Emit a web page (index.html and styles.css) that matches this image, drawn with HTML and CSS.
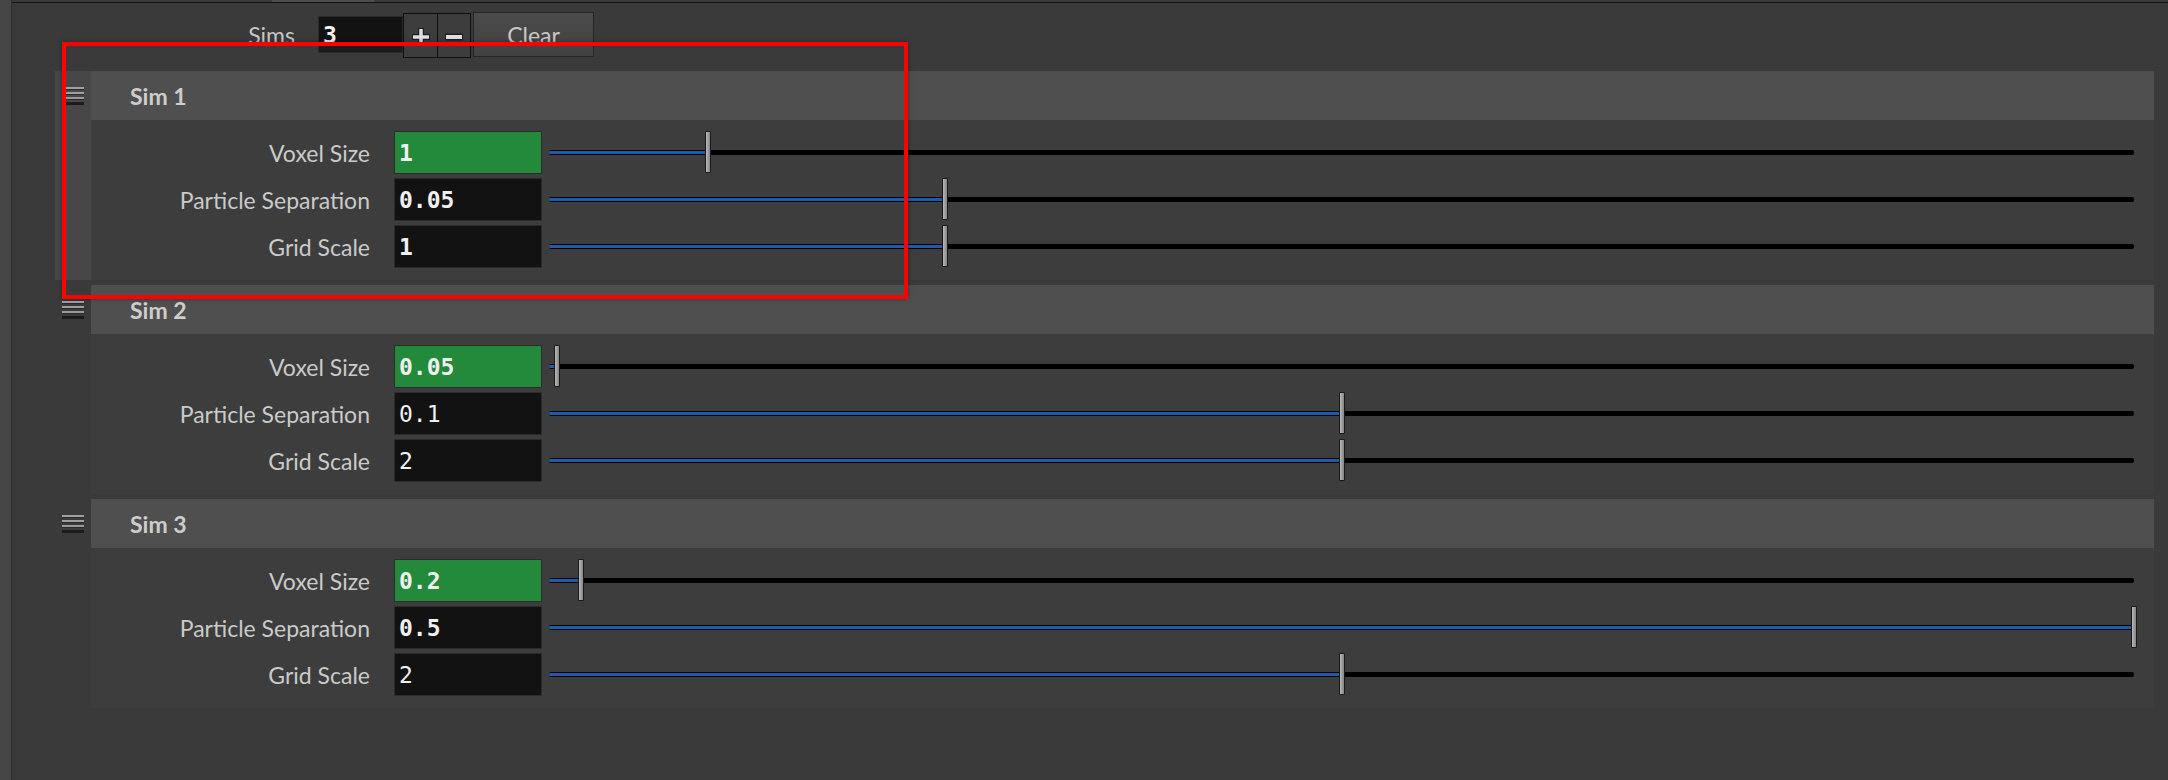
FILE: index.html
```html
<!DOCTYPE html>
<html>
<head>
<meta charset="utf-8">
<link rel="stylesheet" href="styles.css">
</head>
<body>
<div class="app">
  <div class="side"></div>
  <div class="main">
    <div class="topedge"><div class="tab"></div></div>
    <div class="toprow">
      <span class="toplabel">Sims</span>
      <div class="count">3</div>
      <div class="pm">
        <div class="pmb"><svg width="20" height="20" viewBox="0 0 20 20"><path d="M10 1V19M1 10H19" stroke="#1c1e26" stroke-width="6"/><path d="M10 2V18M2 10H18" stroke="#dedede" stroke-width="3.5"/></svg></div>
        <div class="pmb"><svg width="20" height="8" viewBox="0 0 20 8"><path d="M1 4H19" stroke="#1c1e26" stroke-width="7"/><path d="M2 4H18" stroke="#dedede" stroke-width="4"/></svg></div>
      </div>
      <div class="clear">Clear</div>
    </div>

    <div class="list">
      <div class="sim selected">
        <div class="grip"><svg width="22" height="19" viewBox="0 0 22 19"><rect y="0" width="22" height="2" fill="#a0a0a0"/><rect y="2" width="22" height="1" fill="#2a2a2a"/><rect y="5" width="22" height="2" fill="#a0a0a0"/><rect y="7" width="22" height="1" fill="#2a2a2a"/><rect y="10" width="22" height="2" fill="#9a9a9a"/><rect y="12" width="22" height="1" fill="#2a2a2a"/><rect y="15" width="22" height="3" fill="#1c1c1c"/></svg></div>
        <div class="simhead">Sim 1</div>
        <div class="simbody">
          <div class="row"><span class="lbl">Voxel Size</span><div class="val g b">1</div><div class="slider"><div class="track"><div class="fill" style="width:10%"></div></div><div class="thumb" style="left:10%"></div></div></div>
          <div class="row"><span class="lbl">Particle Separation</span><div class="val b">0.05</div><div class="slider"><div class="track"><div class="fill" style="width:25%"></div></div><div class="thumb" style="left:25%"></div></div></div>
          <div class="row"><span class="lbl">Grid Scale</span><div class="val b">1</div><div class="slider"><div class="track"><div class="fill" style="width:25%"></div></div><div class="thumb" style="left:25%"></div></div></div>
        </div>
      </div>

      <div class="sim">
        <div class="grip"><svg width="22" height="19" viewBox="0 0 22 19"><rect y="0" width="22" height="2" fill="#a0a0a0"/><rect y="2" width="22" height="1" fill="#2a2a2a"/><rect y="5" width="22" height="2" fill="#a0a0a0"/><rect y="7" width="22" height="1" fill="#2a2a2a"/><rect y="10" width="22" height="2" fill="#9a9a9a"/><rect y="12" width="22" height="1" fill="#2a2a2a"/><rect y="15" width="22" height="3" fill="#1c1c1c"/></svg></div>
        <div class="simhead">Sim 2</div>
        <div class="simbody">
          <div class="row"><span class="lbl">Voxel Size</span><div class="val g b">0.05</div><div class="slider"><div class="track"><div class="fill" style="width:0.5%"></div></div><div class="thumb" style="left:0.5%"></div></div></div>
          <div class="row"><span class="lbl">Particle Separation</span><div class="val">0.1</div><div class="slider"><div class="track"><div class="fill" style="width:50%"></div></div><div class="thumb" style="left:50%"></div></div></div>
          <div class="row"><span class="lbl">Grid Scale</span><div class="val">2</div><div class="slider"><div class="track"><div class="fill" style="width:50%"></div></div><div class="thumb" style="left:50%"></div></div></div>
        </div>
      </div>

      <div class="sim">
        <div class="grip"><svg width="22" height="19" viewBox="0 0 22 19"><rect y="0" width="22" height="2" fill="#a0a0a0"/><rect y="2" width="22" height="1" fill="#2a2a2a"/><rect y="5" width="22" height="2" fill="#a0a0a0"/><rect y="7" width="22" height="1" fill="#2a2a2a"/><rect y="10" width="22" height="2" fill="#9a9a9a"/><rect y="12" width="22" height="1" fill="#2a2a2a"/><rect y="15" width="22" height="3" fill="#1c1c1c"/></svg></div>
        <div class="simhead">Sim 3</div>
        <div class="simbody">
          <div class="row"><span class="lbl">Voxel Size</span><div class="val g b">0.2</div><div class="slider"><div class="track"><div class="fill" style="width:2%"></div></div><div class="thumb" style="left:2%"></div></div></div>
          <div class="row"><span class="lbl">Particle Separation</span><div class="val b">0.5</div><div class="slider"><div class="track"><div class="fill" style="width:100%"></div></div><div class="thumb" style="left:100%"></div></div></div>
          <div class="row"><span class="lbl">Grid Scale</span><div class="val">2</div><div class="slider"><div class="track"><div class="fill" style="width:50%"></div></div><div class="thumb" style="left:50%"></div></div></div>
        </div>
      </div>
    </div>
  </div>
  <div class="mark"></div>
</div>
</body>
</html>
```
FILE: styles.css
```css
* { box-sizing: border-box; }
html, body { margin: 0; padding: 0; }
body {
  background: #3a3a3a;
  font-family: Lato, "Liberation Sans", sans-serif;
  color: #c8c8c8;
  overflow: hidden;
}
.app {
  position: relative;
  display: flex;
  height: 780px;
}
.side {
  flex: none;
  width: 12px;
  background: #464646;
  border-right: 1px solid #303030;
}
.main {
  flex: 1;
  display: flex;
  flex-direction: column;
}
.topedge {
  height: 3px;
  border-bottom: 1px solid #111;
  display: flex;
}
.tab {
  margin-left: 260px;
  width: 102px;
  background: #4e4e4e;
}
.toprow {
  display: flex;
  align-items: center;
  height: 45px;
  margin-top: 9px;
}
.toplabel {
  width: 283px;
  text-align: right;
  font-size: 23px;
  color: #c6c6c6;
}
.count {
  margin-left: 23px;
  width: 85px;
  height: 37px;
  background: #121212;
  border: 1px solid #2b2b2b;
  box-shadow: inset 0 -6px 0 #1b1b1b;
  font-family: "DejaVu Sans Mono", monospace;
  font-weight: bold;
  font-size: 23px;
  color: #f2f2f2;
  padding-left: 4px;
  display: flex;
  align-items: center;
}
.pm {
  display: flex;
  height: 45px;
  margin-top: 2px;
  border: 1px solid #0e0e0e;
  background: #3d3d3d;
}
.pmb {
  width: 33px;
  display: flex;
  align-items: center;
  justify-content: center;
  padding-top: 3px;
}
.pmb + .pmb { border-left: 1px solid #0e0e0e; }
.clear {
  margin-left: 2px;
  width: 121px;
  height: 45px;
  background: linear-gradient(#4b4b4b, #414141);
  border: 1px solid #262626;
  color: #c8c8c8;
  font-size: 23px;
  display: flex;
  align-items: center;
  justify-content: center;
}
.list {
  margin: 14px 14px 0 43px;
  display: flex;
  flex-direction: column;
  gap: 5px;
}
.sim {
  display: grid;
  grid-template-columns: 36px 1fr;
  grid-template-rows: 49px 160px;
}
.sim.selected { background: #474747; }
.grip {
  display: flex;
  align-items: center;
  padding-left: 7px;
  padding-top: 2px;
}
.simhead {
  background: #4f4f4f;
  font-weight: 700;
  font-size: 23px;
  color: #cdcdcd;
  padding-left: 39px;
  display: flex;
  align-items: center;
}
.simbody {
  grid-column: 2;
  background: #3d3d3d;
  padding: 11px 20px 0 0;
  display: flex;
  flex-direction: column;
  gap: 4px;
}
.row {
  display: flex;
  align-items: center;
  height: 43px;
}
.lbl {
  width: 279px;
  flex: none;
  text-align: right;
  font-size: 23px;
  color: #cacaca;
}
.val {
  flex: none;
  margin-left: 24px;
  width: 148px;
  height: 43px;
  background: #121212;
  border: 1px solid #2c2c2c;
  font-family: "DejaVu Sans Mono", monospace;
  font-size: 23px;
  color: #f0f0f0;
  padding-left: 4px;
  display: flex;
  align-items: center;
}
.val.b { font-weight: bold; }
.val.g { background: #238a3c; }
.slider {
  flex: 1;
  margin-left: 7px;
  height: 43px;
  position: relative;
  display: flex;
  align-items: center;
}
.track {
  width: 100%;
  height: 5px;
  background: #000;
  border-radius: 2px;
}
.fill {
  height: 3px;
  margin-top: 1px;
  background: #1b5cab;
  border-radius: 1px;
}
.thumb {
  position: absolute;
  top: 0;
  height: 42px;
  width: 6px;
  margin-left: -3px;
  background: linear-gradient(90deg, #b8b8b8, #858585);
  border: 1px solid #1a1a1a;
  border-radius: 1px;
}
.mark {
  position: absolute;
  left: 62px;
  top: 42px;
  width: 846px;
  height: 257px;
  border: 4px solid #ff0000;
  box-shadow: 0 0 4px rgba(0,0,0,0.35);
  pointer-events: none;
}
```
